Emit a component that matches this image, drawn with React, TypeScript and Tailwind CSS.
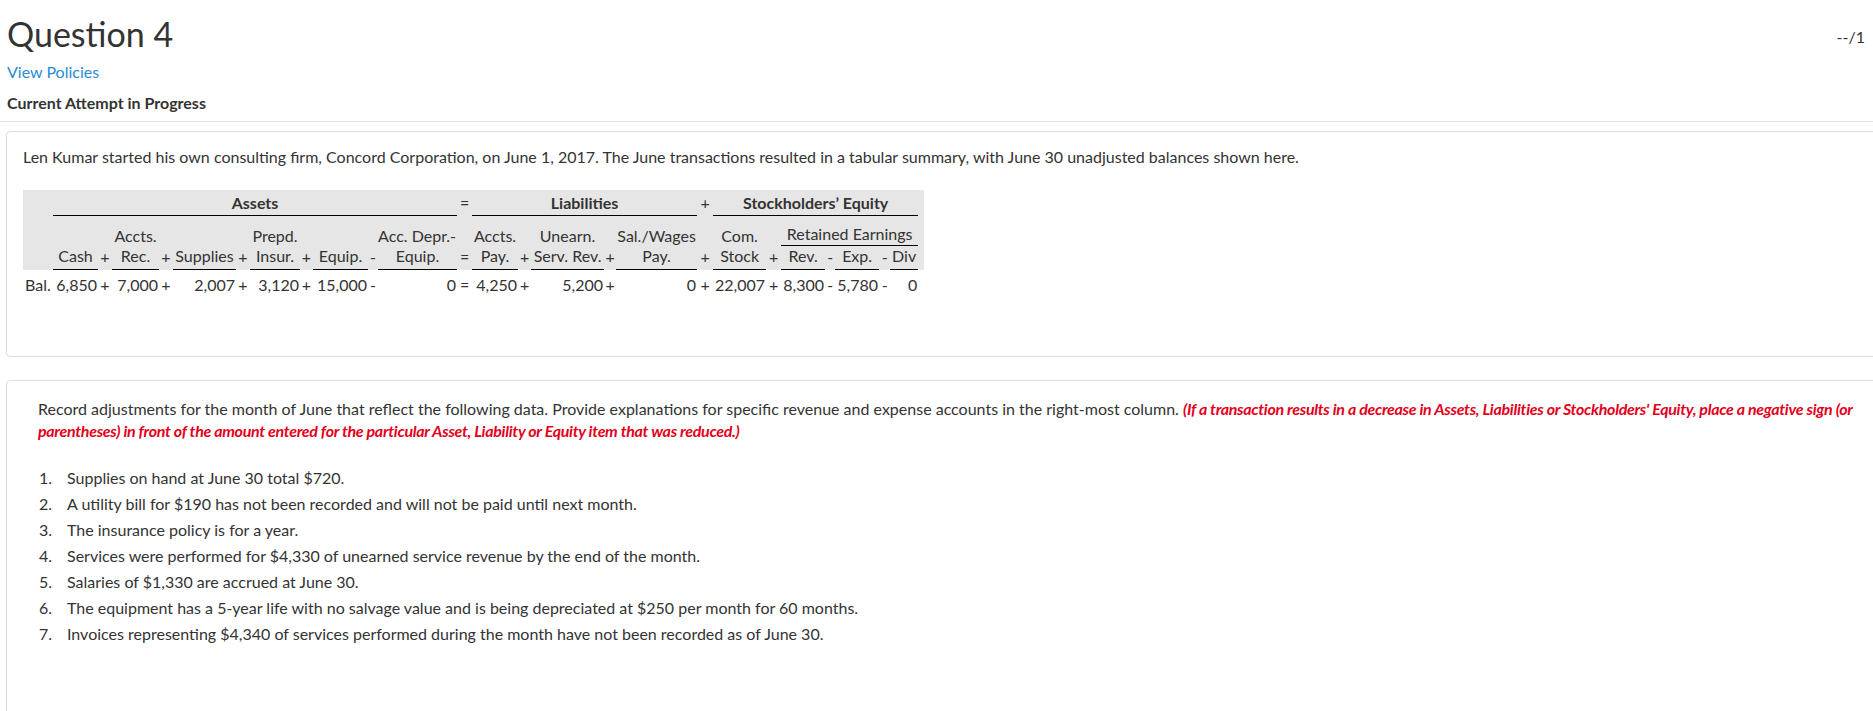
import React from 'react';

const font = "font-['Lato','Liberation_Sans',sans-serif]";

// widths of the columns of the balance table, left to right
const colWidths = [30, 45, 14, 47, 14, 63, 14, 50, 13, 55, 10, 79, 15, 46, 13, 73, 12, 81, 16, 53, 15, 44, 10, 44, 11, 28, 6];

type Cell = { text?: string; op?: boolean };

const lineTwo: Cell[] = [
  {},
  { text: 'Cash' },
  { text: '+', op: true },
  { text: 'Rec.' },
  { text: '+', op: true },
  { text: 'Supplies' },
  { text: '+', op: true },
  { text: 'Insur.' },
  { text: '+', op: true },
  { text: 'Equip.' },
  { text: '-', op: true },
  { text: 'Equip.' },
  { text: '=', op: true },
  { text: 'Pay.' },
  { text: '+', op: true },
  { text: 'Serv. Rev.' },
  { text: '+', op: true },
  { text: 'Pay.' },
  { text: '+', op: true },
  { text: 'Stock' },
  { text: '+', op: true },
  { text: 'Rev.' },
  { text: '-', op: true },
  { text: 'Exp.' },
  { text: '-', op: true },
  { text: 'Div' },
  { op: true },
];

const balances: Cell[] = [
  { text: 'Bal.' },
  { text: '6,850' },
  { text: '+', op: true },
  { text: '7,000' },
  { text: '+', op: true },
  { text: '2,007' },
  { text: '+', op: true },
  { text: '3,120' },
  { text: '+', op: true },
  { text: '15,000' },
  { text: '-', op: true },
  { text: '0' },
  { text: '=', op: true },
  { text: '4,250' },
  { text: '+', op: true },
  { text: '5,200' },
  { text: '+', op: true },
  { text: '0' },
  { text: '+', op: true },
  { text: '22,007' },
  { text: '+', op: true },
  { text: '8,300' },
  { text: '-', op: true },
  { text: '5,780' },
  { text: '-', op: true },
  { text: '0' },
  { op: true },
];

const adjustments = [
  'Supplies on hand at June 30 total $720.',
  'A utility bill for $190 has not been recorded and will not be paid until next month.',
  'The insurance policy is for a year.',
  'Services were performed for $4,330 of unearned service revenue by the end of the month.',
  'Salaries of $1,330 are accrued at June 30.',
  'The equipment has a 5-year life with no salvage value and is being depreciated at $250 per month for 60 months.',
  'Invoices representing $4,340 of services performed during the month have not been recorded as of June 30.',
];

function BalanceTable() {
  return (
    <table className="table-fixed border-separate border-spacing-0 text-[16px] leading-[20px] text-[#333]" style={{ width: colWidths.reduce((a, b) => a + b, 0) }}>
      <colgroup>
        {colWidths.map((w, i) => (
          <col key={i} style={{ width: w }} />
        ))}
      </colgroup>
      <tbody>
        <tr className="bg-[#e6e6e6] h-[26px]">
          <td />
          <td colSpan={11} className="border-b border-black text-center font-bold align-middle">Assets</td>
          <td className="text-center">=</td>
          <td colSpan={5} className="border-b border-black text-center font-bold">Liabilities</td>
          <td className="text-center">+</td>
          <td colSpan={7} className="border-b border-black text-center font-bold">Stockholders’ Equity</td>
          <td />
        </tr>
        <tr className="bg-[#e6e6e6] h-[30px]">
          <td colSpan={3} />
          <td className="text-center align-bottom">Accts.</td>
          <td colSpan={3} />
          <td className="text-center align-bottom">Prepd.</td>
          <td colSpan={3} />
          <td className="text-right align-bottom whitespace-nowrap pr-[1px]">Acc. Depr.-</td>
          <td />
          <td className="text-center align-bottom">Accts.</td>
          <td />
          <td className="text-center align-bottom">Unearn.</td>
          <td />
          <td className="text-center align-bottom whitespace-nowrap">Sal./Wages</td>
          <td />
          <td className="text-center align-bottom">Com.</td>
          <td />
          <td colSpan={5} className="border-b border-black text-center align-bottom whitespace-nowrap pb-[1px]">Retained Earnings</td>
          <td />
        </tr>
        <tr className="bg-[#e6e6e6] h-[24px]">
          {lineTwo.map((c, i) =>
            c.op || i === 0 ? (
              <td key={i} className="text-center align-bottom pb-[3px] whitespace-nowrap">{c.text}</td>
            ) : (
              <td key={i} className="text-center align-bottom pb-[3px] border-b border-black whitespace-nowrap">{c.text}</td>
            )
          )}
        </tr>
        <tr className="h-[29px]">
          {balances.map((c, i) =>
            i === 0 ? (
              <td key={i} className="pl-[2px] align-middle">{c.text}</td>
            ) : c.op ? (
              <td key={i} className="text-center align-middle">{c.text}</td>
            ) : (
              <td key={i} className="text-right pr-[1px] align-middle whitespace-nowrap">{c.text}</td>
            )
          )}
        </tr>
      </tbody>
    </table>
  );
}

export default function App() {
  return (
    <div className={`${font} w-full h-[711px] overflow-hidden bg-white text-[#333]`}>
      <div className="flex justify-between items-start pl-[7px] pr-[8px]">
        <h1 className="text-[34px] leading-[40px] mt-[14px] font-normal text-[#333]">Question 4</h1>
        <span className="text-[16px] mt-[25px] text-[#333]">--/1</span>
      </div>
      <div className="pl-[7px] mt-[8px] text-[16px] leading-[20px]">
        <a className="text-[#2a8bd0]">View Policies</a>
      </div>
      <div className="pl-[7px] mt-[11px] text-[16px] leading-[20px] font-bold text-[#333]">Current Attempt in Progress</div>
      <div className="mt-[8px] border-t border-[#e5e5e5]" />

      <div className="ml-[6px] mt-[9px] w-[1880px] h-[226px] border border-[#dcdcdc] rounded-[4px] pl-[16px] pt-[14px]">
        <p className="text-[16px] leading-[22px]">
          Len Kumar started his own consulting firm, Concord Corporation, on June 1, 2017. The June transactions resulted in a tabular summary, with June 30 unadjusted balances shown here.
        </p>
        <div className="mt-[22px]">
          <BalanceTable />
        </div>
      </div>

      <div className="ml-[6px] mt-[23px] w-[1880px] h-[400px] border border-[#dcdcdc] rounded-[4px] pl-[31px] pt-[17px]">
        <p className="text-[16px] leading-[22px] w-[1830px]">
          Record adjustments for the month of June that reflect the following data. Provide explanations for specific revenue and expense accounts in the right-most column.{' '}
          <b className="italic tracking-[-0.3px] text-[#e3001b]">
            (If a transaction results in a decrease in Assets, Liabilities or Stockholders' Equity, place a negative sign (or parentheses) in front of the amount entered for the particular Asset, Liability or Equity item that was reduced.)
          </b>
        </p>
        <ol className="mt-[23px] text-[16px] leading-[26px]">
          {adjustments.map((a, i) => (
            <li key={a} className="flex gap-[15px]">
              <span className="w-[14px] text-right shrink-0">{i + 1}.</span>
              <span>{a}</span>
            </li>
          ))}
        </ol>
      </div>
    </div>
  );
}
